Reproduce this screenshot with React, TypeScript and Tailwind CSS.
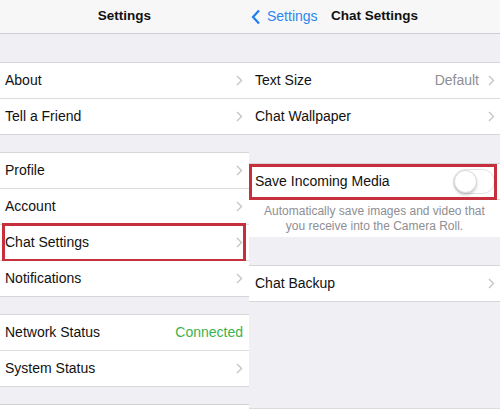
import type { ReactNode } from 'react';

const font = "font-['Liberation_Sans',Arial,Helvetica,sans-serif]";

function Chevron() {
  return (
    <svg width="7" height="11" viewBox="0 0 7 11" className="shrink-0">
      <polyline points="1,1 5.5,5.5 1,10" fill="none" stroke="#c4c4c9" strokeWidth="1.4" />
    </svg>
  );
}

function Row({
  label,
  detail,
  detailClass = 'text-[#8e8e93]',
  chevron = true,
  last = false,
  pad = 'pl-[5px] pr-[6px]',
  children,
}: {
  label: string;
  detail?: string;
  detailClass?: string;
  chevron?: boolean;
  last?: boolean;
  pad?: string;
  children?: ReactNode;
}) {
  return (
    <div
      className={`relative flex items-center bg-white ${pad} ${
        last ? 'h-[35px]' : 'h-[36px] border-b border-[#dcdce0]'
      }`}
    >
      <span className="flex-1 text-[14px] text-[#111]">{label}</span>
      {detail && <span className={`text-[14px] ${detailClass} ${chevron ? 'mr-[9px]' : ''}`}>{detail}</span>}
      {chevron && <Chevron />}
      {children}
    </div>
  );
}

function Group({ children }: { children: ReactNode }) {
  return <div className="border-y border-[#d6d6da] bg-white">{children}</div>;
}

function Highlight({ className }: { className: string }) {
  return <div className={`absolute border-[3px] border-[#c6303c] pointer-events-none ${className}`} />;
}

function NavBar({ children }: { children: ReactNode }) {
  return (
    <div className="relative h-[34px] shrink-0 flex items-center justify-center bg-[#f7f7f8] border-b border-[#cfcfd3]">
      {children}
    </div>
  );
}

function SettingsPanel() {
  return (
    <div className="w-[249px] flex flex-col bg-[#efeff4]">
      <NavBar>
        <span className="text-[13.5px] font-bold text-[#111]">Settings</span>
      </NavBar>
      <div className="h-[28px]" />
      <Group>
        <Row label="About" />
        <Row label="Tell a Friend" last />
      </Group>
      <div className="h-[17px]" />
      <Group>
        <Row label="Profile" />
        <Row label="Account" />
        <Row label="Chat Settings">
          <Highlight className="left-[2px] right-[3px] -top-[2px] -bottom-[2px]" />
        </Row>
        <Row label="Notifications" last />
      </Group>
      <div className="h-[17px]" />
      <Group>
        <Row label="Network Status" detail="Connected" detailClass="text-[#3db24b]" chevron={false} />
        <Row label="System Status" last />
      </Group>
      <div className="h-[17px]" />
      <div className="flex-1 bg-white border-t border-[#cfcfd3]" />
    </div>
  );
}

function Toggle() {
  return (
    <div className="w-[42px] h-[25px] rounded-full border border-[#e2e2e6] bg-white relative shrink-0">
      <div className="absolute left-0 top-0 w-[23px] h-[23px] rounded-full bg-white border border-[#dadade] shadow-[0_2px_3px_rgba(0,0,0,0.2)]" />
    </div>
  );
}

function ChatSettingsPanel() {
  return (
    <div className="flex-1 flex flex-col bg-[#efeff4]">
      <NavBar>
        <div className="absolute left-[2px] top-0 h-full flex items-center gap-[6px]">
          <svg width="10" height="16" viewBox="0 0 10 16">
            <polyline points="8,1.5 2,8 8,14.5" fill="none" stroke="#1f7ff0" strokeWidth="2.2" />
          </svg>
          <span className="text-[14px] text-[#2b86ec]">Settings</span>
        </div>
        <span className="text-[13.5px] font-bold text-[#111]">Chat Settings</span>
      </NavBar>
      <div className="h-[28px]" />
      <Group>
        <Row label="Text Size" detail="Default" pad="pl-[6px] pr-[5px]" />
        <Row label="Chat Wallpaper" pad="pl-[6px] pr-[5px]" last />
      </Group>
      <div className="h-[28px]" />
      <Group>
        <Row label="Save Incoming Media" chevron={false} pad="pl-[6px] pr-[5px]" last>
          <Toggle />
          <Highlight className="left-0 right-[3px] top-0 -bottom-[1px]" />
        </Row>
      </Group>
      <div className="h-[37px] bg-white flex flex-col items-center justify-center text-[12px] leading-[15px] text-[#8e8e93]">
        <span>Automatically save images and video that</span>
        <span>you receive into the Camera Roll.</span>
      </div>
      <div className="h-[28px]" />
      <Group>
        <Row label="Chat Backup" pad="pl-[6px] pr-[5px]" last />
      </Group>
      <div className="h-[106px]" />
      <div className="flex-1 bg-white border-t border-[#dcdce0]" />
    </div>
  );
}

export default function App() {
  return (
    <div className={`w-[500px] h-[413px] flex overflow-hidden bg-white ${font}`}>
      <SettingsPanel />
      <ChatSettingsPanel />
    </div>
  );
}
